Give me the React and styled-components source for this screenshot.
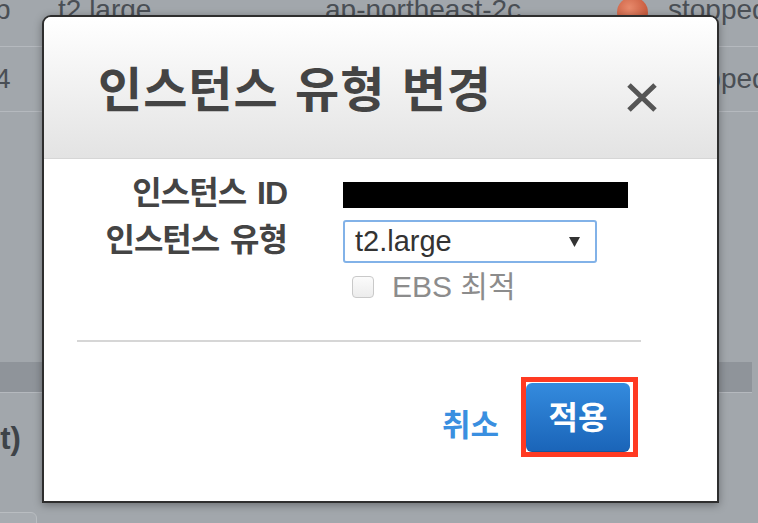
import React from 'react'
import styled, { createGlobalStyle } from 'styled-components'

const GlobalStyle = createGlobalStyle`
  html, body {
    margin: 0;
    padding: 0;
  }
  body {
    font-family: "Liberation Sans", "Noto Sans CJK KR", Arial, sans-serif;
  }
`

const rows = [
    { id: 'b', type: 't2.large', zone: 'ap-northeast-2c', state: 'stopped', dot: true, pad: 13, top: -18 },
    { id: '4', type: '', zone: '', state: 'stopped', dot: false, pad: 17, top: 0 },
]

const ModifyTypeDialog = () => {
    return (
        <Modal role="dialog">
            <Header>
                <Title>인스턴스 유형 변경</Title>
                <CloseButton aria-label="close">
                    <svg width="32" height="29" viewBox="0 0 32 29">
                        <path d="M3 2 L29 27 M29 2 L3 27" stroke="#555" strokeWidth="5" fill="none" />
                    </svg>
                </CloseButton>
            </Header>
            <Form>
                <Label>인스턴스 ID</Label>
                <Redacted />
                <Label>인스턴스 유형</Label>
                <SelectBox>
                    <span>t2.large</span>
                    <svg width="11" height="10" viewBox="0 0 11 10">
                        <path d="M0 0 H11 L5.5 10 Z" fill="#333" />
                    </svg>
                </SelectBox>
                <CheckRow>
                    <CheckBox />
                    <span>EBS 최적</span>
                </CheckRow>
            </Form>
            <Divider />
            <Footer>
                <CancelLink>취소</CancelLink>
                <Highlight>
                    <ApplyButton>적용</ApplyButton>
                </Highlight>
            </Footer>
        </Modal>
    )
}

const App = () => {
    return (
        <>
            <GlobalStyle />
            <Page>
                {rows.map((r) => (
                    <Row key={r.id} $pad={r.pad} $top={r.top}>
                        <Cell>{r.id}</Cell>
                        <Cell>{r.type}</Cell>
                        <Cell>{r.zone}</Cell>
                        <Cell>{r.dot && <StatusDot />}</Cell>
                        <Cell>{r.state}</Cell>
                    </Row>
                ))}
                <Spacer />
                <Band />
                <SectionTitle>st)</SectionTitle>
                <ButtonStub />
                <ModifyTypeDialog />
            </Page>
        </>
    )
}

export default App

const Page = styled.div`
    position: relative;
    width: 100%;
    height: 100vh;
    overflow: hidden;
    background: #a2a7ac;
    color: #4a4f55;
`

const Row = styled.div`
    display: grid;
    grid-template-columns: 63px 267px 292px 51px 1fr;
    height: 65px;
    box-sizing: border-box;
    margin: ${(p) => p.$top}px 0 0 -5px;
    padding-top: ${(p) => p.$pad}px;
    border-bottom: 1px solid #b5b9be;
    font-size: 28px;
    line-height: 30px;
    white-space: nowrap;
`

const Cell = styled.div`
    overflow: visible;
`

const StatusDot = styled.div`
    width: 31px;
    height: 31px;
    margin-top: 2px;
    border-radius: 50%;
    background: radial-gradient(circle at 40% 35%, #e88a6c, #c95d40 65%, #b04b31);
`

const Spacer = styled.div`
    height: 250px;
`

const Band = styled.div`
    height: 30px;
    margin-right: 6px;
    background: #8f949a;
    border-bottom: 1px solid #b5b9be;
`

const SectionTitle = styled.div`
    height: 119px;
    box-sizing: border-box;
    padding-top: 28px;
    margin-left: -17px;
    font-size: 31px;
    line-height: 36px;
    font-weight: 700;
    color: #3e4348;
`

const ButtonStub = styled.div`
    width: 45px;
    height: 30px;
    margin-left: -10px;
    border: 1px solid #b9bdc1;
    border-radius: 6px;
    background: #a7acb1;
`

const Modal = styled.div`
    position: absolute;
    left: 42px;
    top: 15px;
    width: 677px;
    height: 488px;
    box-sizing: border-box;
    border: 2px solid #2e2e2e;
    border-radius: 9px 9px 0 0;
    background: #fff;
    box-shadow: 0 2px 8px rgba(0, 0, 0, 0.35);
    display: flex;
    flex-direction: column;
    overflow: hidden;
`

const Header = styled.div`
    height: 142px;
    flex-shrink: 0;
    box-sizing: border-box;
    display: flex;
    align-items: center;
    justify-content: space-between;
    padding: 8px 59px 0 54px;
    background: linear-gradient(#ffffff, #e3e3e3);
    border-bottom: 1px solid #d6d6d6;
`

const Title = styled.h2`
    margin: 0;
    font-size: 48px;
    font-weight: 700;
    letter-spacing: 1px;
    word-spacing: 2px;
    line-height: 1.1;
    color: #444;
`

const CloseButton = styled.button`
    border: none;
    background: none;
    padding: 0;
    margin-top: 12px;
    display: flex;
`

const Form = styled.div`
    display: grid;
    grid-template-columns: 243px 1fr;
    column-gap: 56px;
    row-gap: 12px;
    align-items: center;
    padding-top: 23px;
`

const Label = styled.div`
    text-align: right;
    margin-top: -4px;
    font-size: 32px;
    font-weight: 700;
    letter-spacing: -1px;
    word-spacing: 3px;
    line-height: 26px;
    color: #444;
`

const Redacted = styled.div`
    width: 285px;
    height: 26px;
    background: #000;
`

const SelectBox = styled.div`
    width: 254px;
    height: 43px;
    box-sizing: border-box;
    display: flex;
    align-items: center;
    justify-content: space-between;
    padding: 0 15px 0 10px;
    border: 2px solid #82b2e8;
    border-radius: 3px;
    font-size: 29px;
    color: #333;
`

const CheckRow = styled.div`
    grid-column: 2;
    display: flex;
    align-items: center;
    gap: 18px;
    padding-left: 9px;
    font-size: 30px;
    line-height: 24px;
    color: #8c8c8c;
`

const CheckBox = styled.div`
    width: 22px;
    height: 22px;
    box-sizing: border-box;
    border: 1px solid #c9c9c9;
    border-radius: 4px;
    background: linear-gradient(#fbfbfb, #ececec);
`

const Divider = styled.div`
    height: 2px;
    margin: 41px 76px 0 33px;
    background: #d6d6d6;
`

const Footer = styled.div`
    display: flex;
    justify-content: flex-end;
    align-items: center;
    gap: 22px;
    padding: 35px 79px 0 0;
`

const CancelLink = styled.a`
    margin-top: 10px;
    font-size: 31px;
    font-weight: 700;
    color: #3a8fe0;
    cursor: pointer;
`

const Highlight = styled.div`
    display: flex;
    border: 5px solid #ff3a22;
    padding: 1px 3px 0 0;
`

const ApplyButton = styled.button`
    width: 104px;
    height: 69px;
    padding: 0 0 6px;
    border: none;
    border-radius: 6px;
    background: linear-gradient(#348bde, #1a64b8);
    box-shadow: inset 0 -1px 0 rgba(0, 0, 0, 0.15);
    color: #fff;
    font-family: inherit;
    font-size: 32px;
    font-weight: 700;
`
